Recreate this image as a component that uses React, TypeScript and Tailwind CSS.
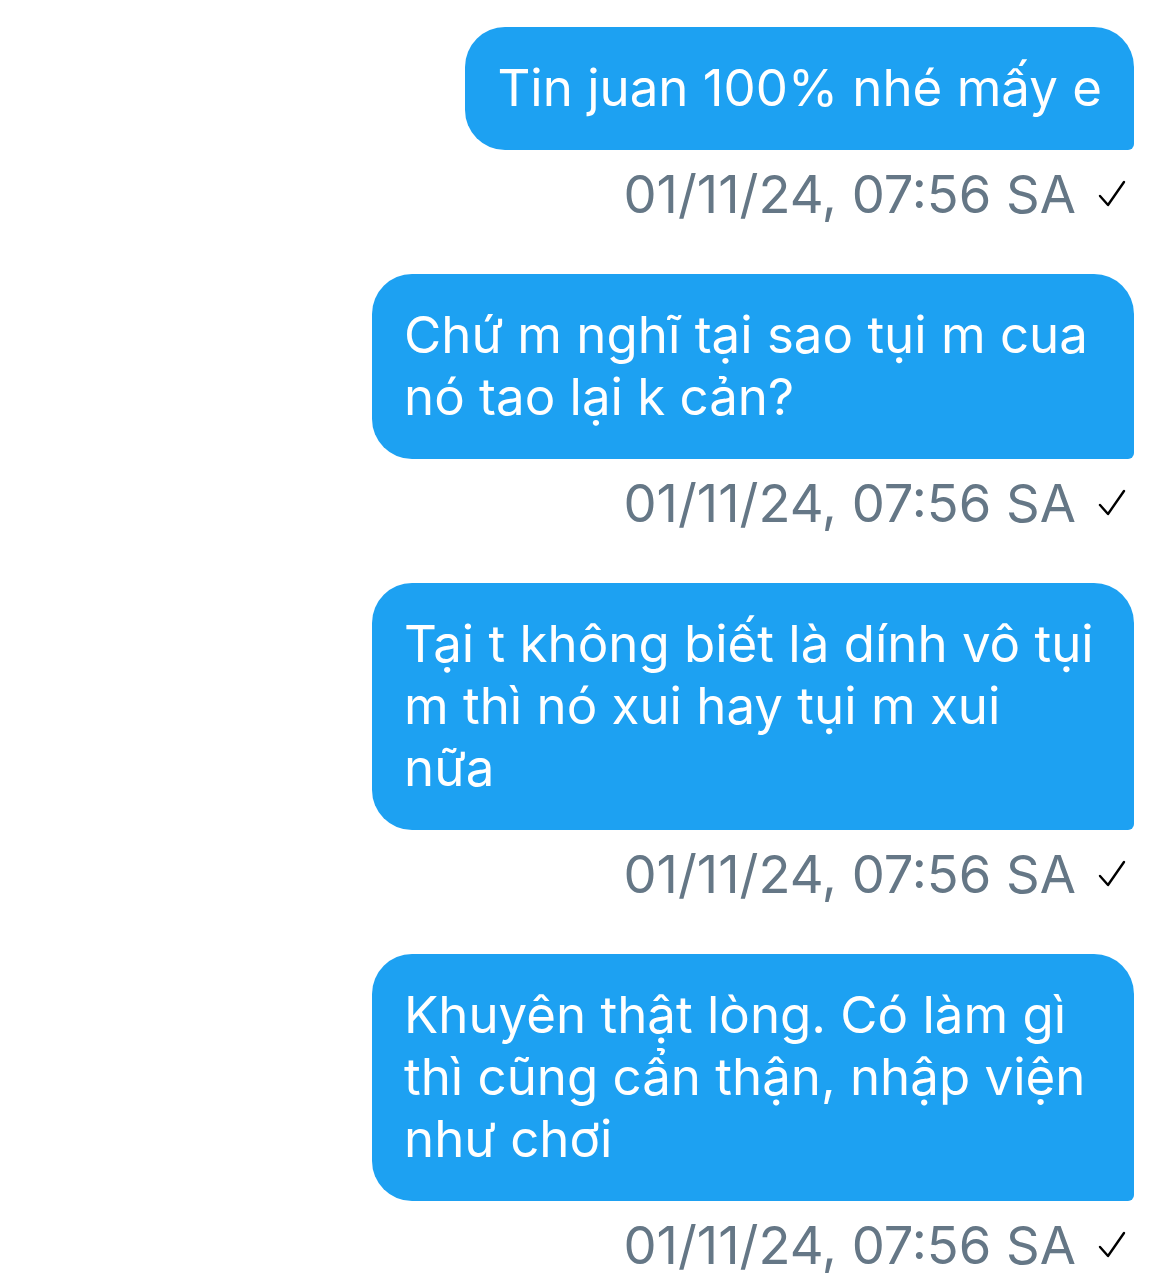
import React from 'react';

const messages: string[][] = [
  ['Tin juan 100% nhé mấy e'],
  ['Chứ m nghĩ tại sao tụi m cua', 'nó tao lại k cản?'],
  ['Tại t không biết là dính vô tụi', 'm thì nó xui hay tụi m xui', 'nữa'],
  ['Khuyên thật lòng. Có làm gì', 'thì cũng cẩn thận, nhập viện', 'như chơi'],
];

const Check: React.FC = () => (
  <svg width="28" height="28" viewBox="0 0 28 28" className="shrink-0">
    <path d="M2 16 L10 25 L26 2" fill="none" stroke="#000" strokeWidth="2.4" strokeLinecap="round" strokeLinejoin="round" />
  </svg>
);

export default function App() {
  return (
    <div className="min-h-[1276px] w-[1170px] bg-white pt-[27px] pr-[36px] font-['Inter',sans-serif]">
      <div className="flex flex-col items-end">
        {messages.map((lines, i) => (
          <div key={i} className="flex flex-col items-end mb-[49px]">
            <div
              className={
                'bg-[#1da1f2] text-white text-[51px] leading-[62px] px-[32px] pt-[30px] pb-[31px] rounded-[40px] rounded-br-[6px] ' +
                (lines.length > 1 ? 'w-[762px]' : '')
              }
            >
              {lines.map((l, j) => (
                <div key={j} className="whitespace-nowrap">{l}</div>
              ))}
            </div>
            <div className="mt-[13px] flex items-center gap-[22px] pr-[8px] text-[#657786] text-[52.5px] leading-[62px]">
              <span>01/11/24, 07:56 SA</span>
              <Check />
            </div>
          </div>
        ))}
      </div>
    </div>
  );
}
